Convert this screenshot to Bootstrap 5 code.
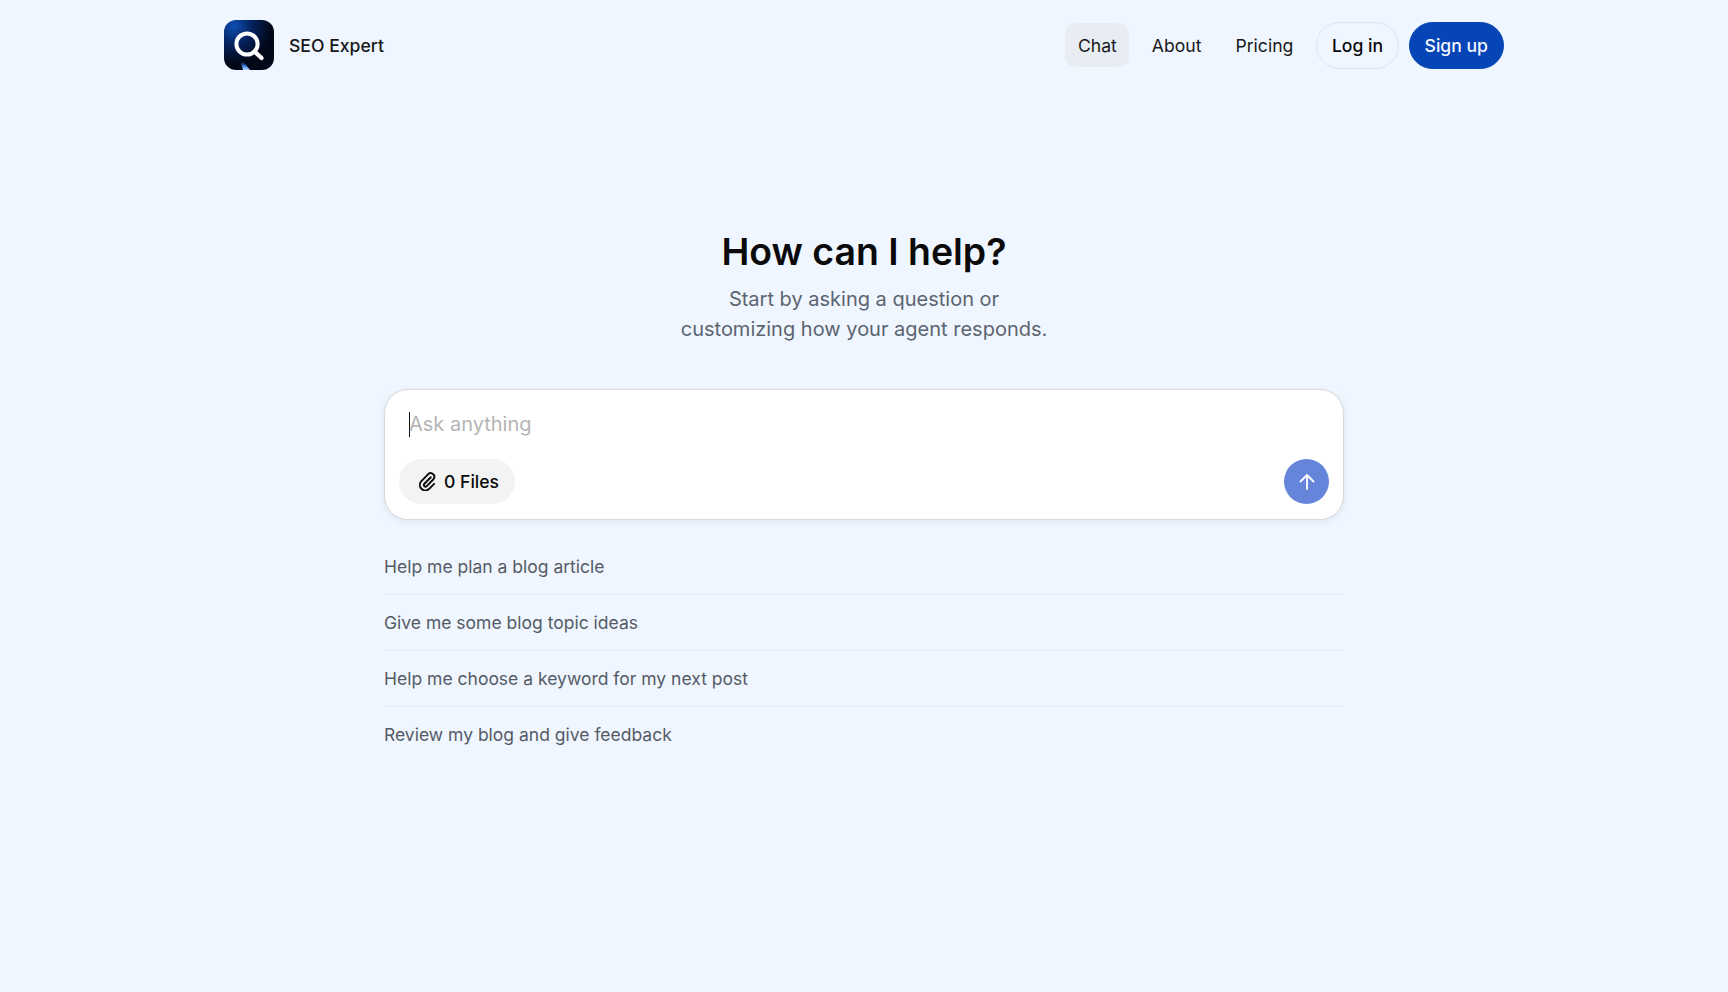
<!DOCTYPE html>
<html lang="en"><head><meta charset="utf-8"><title>SEO Expert</title>
<link href="https://cdn.jsdelivr.net/npm/bootstrap@5.3.0/dist/css/bootstrap.min.css" rel="stylesheet">
<style>
html,body{height:100%}
body{background:#eff6ff;font-family:Inter,"Liberation Sans",sans-serif;color:#0a0a0a;overflow:hidden}
.page-wrap{width:1280px;margin:0 auto}
.top-bar{height:90px}
.brand-logo{width:50px;height:50px;border-radius:12px;display:block}
.brand-name{font-size:17.6px;font-weight:500;color:#18181b;margin-left:15px;padding-top:2px}
.nav-item-link{font-size:17.6px;color:#18181b;height:44px;padding:0 12.5px;line-height:45px;border-radius:10px;text-decoration:none;margin-right:10px}
.nav-item-link.about-link{margin-right:9px}
.nav-item-link.current{background:#e8edf3}
.pill-login,.pill-signup{font-size:17.6px;font-weight:500;height:47px;line-height:45px;border-radius:24px;padding:0 15px;text-decoration:none;border:1px solid #dfe5ee}
.pill-login{color:#0a0a0a;margin-right:10px;margin-left:10.5px;padding:0 14.5px}
.pill-signup{background:#0545b5;border-color:#0545b5;color:#f4f7ff}
.hero{padding-top:139px}
.hero h1{font-size:37.4px;font-weight:600;line-height:46px;margin:0 0 9px}
.hero p{font-size:20px;line-height:30px;color:#5c6470;margin:0}
.chat-box{width:960px;height:131px;margin:45px auto 0;background:#fff;border:1px solid #d6d9dd;border-radius:24px;box-shadow:0 2px 6px rgba(30,50,90,.08);padding:0 14px}
.ask-line{font-size:20px;color:#b5b5b5;height:69px;padding:21px 0 0 10px;line-height:26px}
.caret-mark{display:inline-block;width:1px;height:25px;background:#111;vertical-align:-6px;margin-right:-1px}
.files-pill{background:#f3f3f3;border-radius:23px;height:45px;padding:0 16px 0 17px;font-size:17.6px;font-weight:500;color:#0a0a0a;gap:7px;line-height:47px}
.files-pill svg{margin-top:-1px;margin-left:1px}
.send-round{width:45px;height:45px;border-radius:50%;background:#6585da;padding:0;border:0}
.idea-list{width:960px;margin:19px auto 0}
.idea-row{height:56px;line-height:55px;font-size:17.5px;color:#555b66;border-bottom:1px solid #e6ecf4}
.idea-row:last-child{border-bottom:0}
</style></head><body>
<div class="page-wrap">
<header class="top-bar d-flex align-items-center justify-content-between">
<a class="d-flex align-items-center text-decoration-none" href="#">
<svg class="brand-logo" viewBox="0 0 50 50"><defs><radialGradient id="lg" cx=".2" cy=".12" r=".75"><stop offset="0" stop-color="#0e4db0"/><stop offset=".5" stop-color="#04215c"/><stop offset="1" stop-color="#020818"/></radialGradient><linearGradient id="gl" x1="0" y1="1" x2="0" y2=".4"><stop offset="0" stop-color="#c4dcff"/><stop offset=".4" stop-color="#4f8ff0"/><stop offset="1" stop-color="#2a6fe0" stop-opacity="0"/></linearGradient></defs><rect width="50" height="50" fill="url(#lg)"/><path d="M15 36l4 14h7z" fill="url(#gl)"/><circle cx="23" cy="24" r="10.6" fill="none" stroke="#fff" stroke-width="4"/><path d="M30.500 31.500l7 6.500" stroke="#fff" stroke-width="4.200" stroke-linecap="round"/></svg>
<span class="brand-name">SEO Expert</span></a>
<nav class="d-flex align-items-center">
<a class="nav-item-link current" href="#">Chat</a><a class="nav-item-link about-link" href="#">About</a><a class="nav-item-link me-0" href="#">Pricing</a>
<a class="pill-login" href="#">Log in</a><a class="pill-signup" href="#">Sign up</a>
</nav></header>
<main>
<section class="hero text-center"><h1>How can I help?</h1><p>Start by asking a question or<br>customizing how your agent responds.</p></section>
<div class="chat-box">
<div class="ask-line"><span class="caret-mark"></span>Ask anything</div>
<div class="d-flex justify-content-between align-items-center">
<div class="files-pill d-flex align-items-center"><svg width="20" height="20" viewBox="0 0 24 24" fill="none" stroke="#0a0a0a" stroke-width="2.3" stroke-linecap="round" stroke-linejoin="round"><path d="M16.500 7.500 8.600 15.600a2 2 0 0 0 2.800 2.800l8.300-8.500a4.400 4.400 0 0 0-6.200-6.200L5 12.400a6.600 6.600 0 0 0 9.300 9.300l6.200-6.200"/></svg>0 Files</div>
<button class="send-round d-flex align-items-center justify-content-center" type="button" aria-label="Send"><svg width="20" height="20" viewBox="0 0 20 20" fill="none" stroke="#fff" stroke-width="1.8" stroke-linecap="round" stroke-linejoin="round"><path d="M10 17V3M3.500 9.500 10 3l6.500 6.500"/></svg></button>
</div></div>
<div class="idea-list">
<div class="idea-row">Help me plan a blog article</div>
<div class="idea-row">Give me some blog topic ideas</div>
<div class="idea-row">Help me choose a keyword for my next post</div>
<div class="idea-row">Review my blog and give feedback</div>
</div>
</main></div>
<script src="https://cdn.jsdelivr.net/npm/bootstrap@5.3.0/dist/js/bootstrap.bundle.min.js"></script>
</body></html>
